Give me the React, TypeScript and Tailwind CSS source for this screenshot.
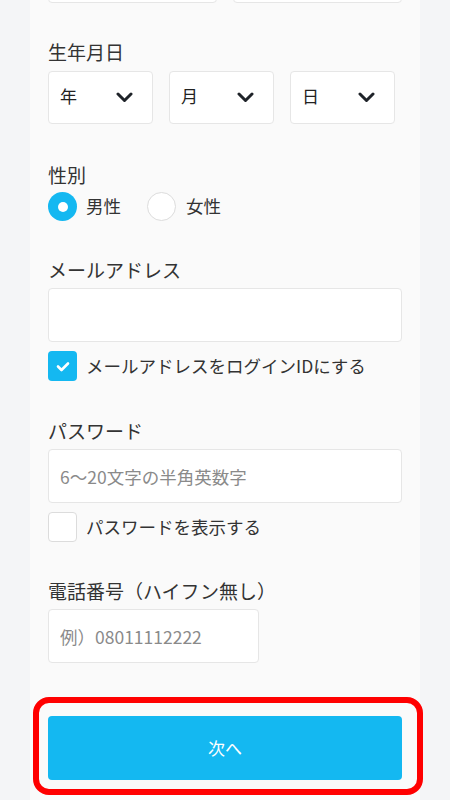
import React from 'react'

const font = { fontFamily: '"Noto Sans CJK JP", "Noto Sans", sans-serif' }

function Label({ children, className = '' }: { children: React.ReactNode; className?: string }) {
  return <p className={`text-[19px] leading-[26px] text-[#333] ${className}`}>{children}</p>
}

function Chevron() {
  return (
    <svg width="17" height="11" viewBox="0 0 17 11" fill="none">
      <path d="M2 2l6.5 6.5L15 2" stroke="#1f2329" strokeWidth="3" strokeLinecap="round" strokeLinejoin="round" />
    </svg>
  )
}

function Select({ label }: { label: string }) {
  return (
    <div className="w-[105px] h-[53px] bg-white border border-[#e6e6e6] rounded-[4px] flex items-center justify-between pl-[11px] pr-[19px]">
      <span className="text-[17px] text-[#222] -mt-[3px]">{label}</span>
      <Chevron />
    </div>
  )
}

function Check({ checked, label }: { checked: boolean; label: string }) {
  return (
    <div className="flex items-center gap-[9px] mt-[9px]">
      {checked ? (
        <span className="w-[29px] h-[30px] rounded-[4px] bg-[#14b8f1] flex items-center justify-center">
          <svg width="14" height="11" viewBox="0 0 14 11" fill="none">
            <path d="M2 5.5l3.5 3.5L12 2.5" stroke="white" strokeWidth="2.6" strokeLinecap="round" strokeLinejoin="round" />
          </svg>
        </span>
      ) : (
        <span className="w-[29px] h-[30px] rounded-[4px] bg-white border border-[#dcdcdc]" />
      )}
      <span className="text-[17.5px] text-[#333]">{label}</span>
    </div>
  )
}

export default function App() {
  return (
    <div className="min-h-[800px] bg-[#f4f5f7] overflow-hidden" style={font}>
      <div className="w-[390px] mx-auto bg-[#fafafa] px-[18px] pb-10 min-h-[800px]">
        {/* name row, scrolled off */}
        <div className="grid grid-cols-2 gap-4 -mt-[51px]">
          <div className="h-[54px] bg-white border border-[#e6e6e6] rounded-[4px]" />
          <div className="h-[54px] bg-white border border-[#e6e6e6] rounded-[4px]" />
        </div>

        {/* birthday */}
        <Label className="mt-[36px]">生年月日</Label>
        <div className="flex gap-4 mt-[6px]">
          <Select label="年" />
          <Select label="月" />
          <Select label="日" />
        </div>

        {/* gender */}
        <Label className="mt-[38px]">性別</Label>
        <div className="flex items-center mt-[4px]">
          <span className="w-[29px] h-[29px] rounded-full bg-[#14b8f1] flex items-center justify-center">
            <span className="w-[10px] h-[10px] rounded-full bg-white" />
          </span>
          <span className="ml-[9px] text-[17.5px] text-[#333]">男性</span>
          <span className="ml-[26px] w-[29px] h-[29px] rounded-full bg-white border border-[#dcdcdc]" />
          <span className="ml-[10px] text-[17.5px] text-[#333]">女性</span>
        </div>

        {/* email */}
        <Label className="mt-[36px]">メールアドレス</Label>
        <input
          type="email"
          className="block w-full h-[54px] mt-[5px] bg-white border border-[#e6e6e6] rounded-[4px] px-[11px] text-[17.5px] outline-none"
        />
        <Check checked label="メールアドレスをログインIDにする" />

        {/* password */}
        <Label className="mt-[37px]">パスワード</Label>
        <input
          type="password"
          placeholder="6〜20文字の半角英数字"
          className="block w-full h-[54px] mt-[5px] bg-white border border-[#e6e6e6] rounded-[4px] px-[11px] text-[17.5px] placeholder-[#8a8a8a] outline-none"
        />
        <Check checked={false} label="パスワードを表示する" />

        {/* phone */}
        <Label className="mt-[36px]">電話番号（ハイフン無し）</Label>
        <input
          type="tel"
          placeholder="例）08011112222"
          className="block w-[211px] h-[54px] mt-[5px] bg-white border border-[#e6e6e6] rounded-[4px] px-[11px] text-[17.5px] placeholder-[#8a8a8a] outline-none"
        />

        {/* next */}
        <div className="relative mt-[53px]">
          <button className="w-full h-[64px] rounded-[4px] bg-[#14b8f1] text-white text-[17px]">次へ</button>
          <span className="absolute -left-[15px] -right-[21px] -top-[19px] -bottom-[15px] border-[6px] border-[#ff0000] rounded-[16px] pointer-events-none" />
        </div>
      </div>
    </div>
  )
}
